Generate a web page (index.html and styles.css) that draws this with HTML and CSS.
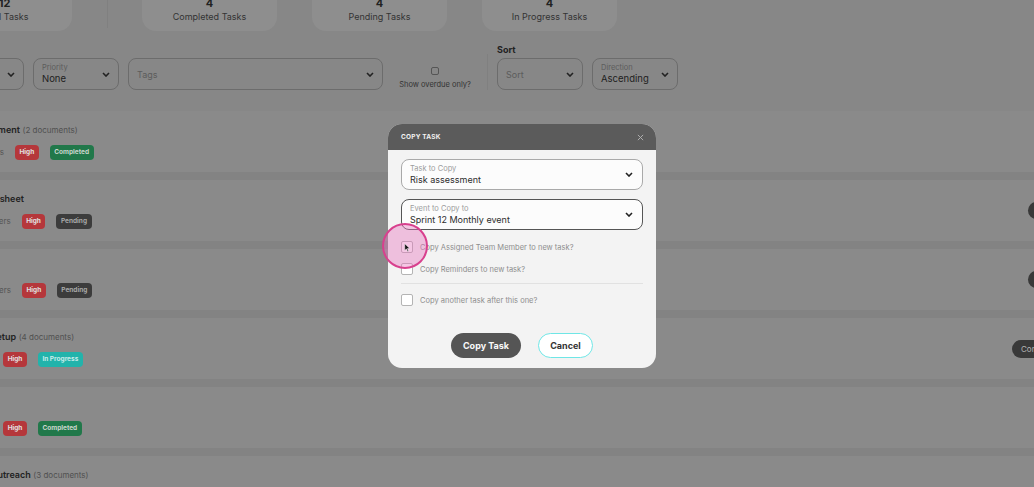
FILE: index.html
```html
<!DOCTYPE html>
<html lang="en">

<head>
  <meta charset="UTF-8">
  <meta name="viewport" content="width=device-width, initial-scale=1.0">
  <title>Tasks</title>
  <link rel="stylesheet" href="styles.css">
</head>

<body>
  <div class="page">
    <div class="stats">
      <div class="stat">
        <div class="stat-num">12</div>
        <div class="stat-label">Total Tasks</div>
      </div>
      <div class="stat-divider"></div>
      <div class="stat">
        <div class="stat-num">4</div>
        <div class="stat-label">Completed Tasks</div>
      </div>
      <div class="stat">
        <div class="stat-num">4</div>
        <div class="stat-label">Pending Tasks</div>
      </div>
      <div class="stat">
        <div class="stat-num">4</div>
        <div class="stat-label">In Progress Tasks</div>
      </div>
    </div>

    <div class="filters">
      <div class="select">
        <div class="select-text">
          <span class="select-label">Status</span>
          <span class="select-value">All</span>
        </div>
        <svg class="chev" viewBox="0 0 8 5"><path d="M1 1l3 3 3-3" /></svg>
      </div>
      <div class="select">
        <div class="select-text">
          <span class="select-label">Priority</span>
          <span class="select-value">None</span>
        </div>
        <svg class="chev" viewBox="0 0 8 5"><path d="M1 1l3 3 3-3" /></svg>
      </div>
      <div class="select select-tags">
        <span class="select-placeholder">Tags</span>
        <svg class="chev" viewBox="0 0 8 5"><path d="M1 1l3 3 3-3" /></svg>
      </div>
      <label class="overdue">
        <span class="box small"></span>
        <span>Show overdue only?</span>
      </label>
      <div class="vdivider"></div>
      <div class="sort">
        <div class="sort-title">Sort</div>
        <div class="sort-row">
          <div class="select">
            <span class="select-placeholder">Sort</span>
            <svg class="chev" viewBox="0 0 8 5"><path d="M1 1l3 3 3-3" /></svg>
          </div>
          <div class="select">
            <div class="select-text">
              <span class="select-label">Direction</span>
              <span class="select-value">Ascending</span>
            </div>
            <svg class="chev" viewBox="0 0 8 5"><path d="M1 1l3 3 3-3" /></svg>
          </div>
        </div>
      </div>
    </div>

    <div class="list">
      <div class="row">
        <div class="row-main">
          <div class="row-title"><b>Risk assessment</b> <span class="docs">(2 documents)</span></div>
          <div class="row-tags">
            <span class="meta">13 attachments</span>
            <span class="badge high">High</span>
            <span class="badge done">Completed</span>
          </div>
        </div>
      </div>
      <div class="row">
        <div class="row-main">
          <div class="row-title"><b>Cost spreadsheet</b></div>
          <div class="row-tags">
            <span class="meta">2 team members</span>
            <span class="badge high">High</span>
            <span class="badge pending">Pending</span>
          </div>
        </div>
        <span class="action">Reopen</span>
      </div>
      <div class="row">
        <div class="row-main">
          <div class="row-title"><b>Venue</b></div>
          <div class="row-tags">
            <span class="meta">4 team members</span>
            <span class="badge high">High</span>
            <span class="badge pending">Pending</span>
          </div>
        </div>
        <span class="action">Reopen</span>
      </div>
      <div class="row">
        <div class="row-main">
          <div class="row-title"><b>Hardware setup</b> <span class="docs">(4 documents)</span></div>
          <div class="row-tags">
            <span class="meta">2 reminders</span>
            <span class="badge high">High</span>
            <span class="badge progress">In Progress</span>
          </div>
        </div>
        <span class="action wide">Continue</span>
      </div>
      <div class="row">
        <div class="row-main">
          <div class="row-title"><b>Catering</b></div>
          <div class="row-tags">
            <span class="meta">2 reminders</span>
            <span class="badge high">High</span>
            <span class="badge done">Completed</span>
          </div>
        </div>
      </div>
      <div class="row">
        <div class="row-main">
          <div class="row-title"><b>Customer outreach</b> <span class="docs">(3 documents)</span></div>
          <div class="row-tags">
            <span class="meta">2 reminders</span>
            <span class="badge high">High</span>
            <span class="badge pending">Pending</span>
          </div>
        </div>
      </div>
    </div>
  </div>

  <div class="modal">
    <div class="modal-head">
      <span>COPY TASK</span>
      <svg class="close" viewBox="0 0 8 8"><path d="M1 1l6 6M7 1l-6 6" /></svg>
    </div>
    <div class="modal-body">
      <div class="field">
        <div class="select-text">
          <span class="field-label">Task to Copy</span>
          <span class="field-value">Risk assessment</span>
        </div>
        <svg class="chev" viewBox="0 0 8 5"><path d="M1 1l3 3 3-3" /></svg>
      </div>
      <div class="field active">
        <div class="select-text">
          <span class="field-label">Event to Copy to</span>
          <span class="field-value">Sprint 12 Monthly event</span>
        </div>
        <svg class="chev" viewBox="0 0 8 5"><path d="M1 1l3 3 3-3" /></svg>
      </div>
      <label class="check first">
        <span class="box"></span>
        <span>Copy Assigned Team Member to new task?</span>
      </label>
      <label class="check">
        <span class="box"></span>
        <span>Copy Reminders to new task?</span>
      </label>
      <div class="hr"></div>
      <label class="check">
        <span class="box"></span>
        <span>Copy another task after this one?</span>
      </label>
      <div class="modal-actions">
        <button class="btn btn-primary">Copy Task</button>
        <button class="btn btn-cancel">Cancel</button>
      </div>
    </div>
  </div>

  <div class="click-mark"></div>
  <svg class="cursor" viewBox="0 0 8 12"><path d="M1 1v9l2.2-2.2 1.6 3.4 1.3-.6-1.6-3.3H7.6z" /></svg>
</body>

</html>
```
FILE: styles.css
```css
* {
  box-sizing: border-box;
}

body {
  margin: 0;
  height: 487px;
  overflow: hidden;
  background: #878787;
  font-family: Inter, "Liberation Sans", sans-serif;
  color: #1f1f1f;
}

.page {
  width: 1200px;
  margin-left: -100px;
}

/* stat cards */
.stats {
  display: flex;
  gap: 35px;
  padding-left: 37px;
  margin-top: -12px;
}

.stat {
  width: 135px;
  height: 43px;
  background: #8e8e8e;
  border-radius: 0 0 14px 14px;
  text-align: center;
  padding-top: 8px;
}

.stat-num {
  font-size: 11px;
  font-weight: 700;
  line-height: 14px;
  color: #222;
}

.stat-label {
  font-size: 9px;
  line-height: 13px;
  color: #333;
}

.stat-divider {
  width: 1px;
  height: 40px;
  background: #808080;
  margin: 0 -1px 0 0;
}

/* filters */
.filters {
  display: flex;
  align-items: flex-end;
  gap: 9px;
  padding-left: 38px;
  margin-top: 13px;
}

.select {
  width: 86px;
  height: 32px;
  border: 1px solid #6c6c6c;
  border-radius: 8px;
  padding: 0 8px 0 8px;
  display: flex;
  align-items: center;
  justify-content: space-between;
}

.select-tags {
  width: 255px;
}

.select-text {
  display: flex;
  flex-direction: column;
}

.select-label {
  font-size: 7.5px;
  line-height: 10px;
  color: #5c5c5c;
}

.select-value {
  font-size: 9.5px;
  line-height: 12px;
  color: #1e1e1e;
}

.select-placeholder {
  font-size: 9px;
  color: #5c5c5c;
}

.chev {
  width: 8px;
  height: 5px;
  fill: none;
  stroke: #222;
  stroke-width: 1.6;
  flex: none;
}

.overdue {
  width: 86px;
  display: flex;
  flex-direction: column;
  align-items: center;
  gap: 5px;
  font-size: 7.5px;
  line-height: 10px;
  color: #333;
}

.box {
  width: 12px;
  height: 12px;
  border: 1px solid #b4b4b4;
  border-radius: 2px;
  background: #fff;
  flex: none;
}

.box.small {
  width: 8px;
  height: 8px;
  border-color: #555;
  background: transparent;
}

.vdivider {
  width: 1px;
  height: 36px;
  background: #808080;
}

.sort {
  display: flex;
  flex-direction: column;
}

.sort-title {
  font-size: 9px;
  font-weight: 700;
  line-height: 12px;
  margin-bottom: 2px;
  color: #222;
}

.sort-row {
  display: flex;
  gap: 9px;
}

/* list */
.list {
  margin-top: 21px;
  display: flex;
  flex-direction: column;
  gap: 8px;
  background: #838383;
}

.row {
  height: 61px;
  background: #8a8a8a;
  display: flex;
  align-items: center;
  justify-content: space-between;
  padding: 0 10px 0 47px;
}

.row-main {
  display: flex;
  flex-direction: column;
  gap: 9px;
}

.row-title {
  font-size: 9px;
  line-height: 12px;
  height: 12px;
  color: #222;
}

.row-title b {
  font-weight: 600;
}

.docs {
  font-size: 8px;
  color: #505050;
}

.row-tags {
  display: flex;
  align-items: center;
  gap: 11px;
}

.meta {
  font-size: 8px;
  color: #555;
}

.badge {
  height: 15px;
  line-height: 15px;
  padding: 0 4.5px;
  border-radius: 4px;
  font-size: 6.5px;
  font-weight: 700;
  color: #e2e2e2;
}

.high {
  background: #b5373b;
}

.done {
  background: #21784a;
  color: #c9d6cd;
}

.pending {
  background: #3c3c3c;
  color: #a9a9a9;
}

.progress {
  background: #22b3ab;
  color: #c8ecea;
}

.action {
  width: 62px;
  height: 17px;
  line-height: 17px;
  border-radius: 9px;
  background: #393939;
  color: #b5b5b5;
  font-size: 8px;
  padding-left: 8px;
}

.action.wide {
  width: 78px;
  height: 18px;
  line-height: 18px;
  padding-left: 9px;
}

/* modal */
.modal {
  position: absolute;
  left: 388px;
  top: 124px;
  width: 268px;
  border-radius: 14px;
  overflow: hidden;
  background: #f3f3f3;
}

.modal-head {
  height: 26px;
  background: #5b5b5b;
  display: flex;
  align-items: center;
  justify-content: space-between;
  padding: 0 12px 0 13px;
  font-size: 6.5px;
  font-weight: 700;
  color: #f2f2f2;
  letter-spacing: 0.2px;
}

.close {
  width: 7px;
  height: 7px;
  fill: none;
  stroke: #b0b0b0;
  stroke-width: 1.1;
}

.modal-body {
  padding: 9px 13px 10px;
  display: flex;
  flex-direction: column;
}

.field {
  height: 31px;
  border: 1px solid #a9a9a9;
  border-radius: 8px;
  background: #fcfcfc;
  display: flex;
  align-items: center;
  justify-content: space-between;
  padding: 0 9px 0 8px;
  margin-bottom: 9px;
}

.field.active {
  border-color: #555;
  margin-bottom: 11px;
}

.field-label {
  font-size: 7.5px;
  line-height: 10px;
  color: #9c9c9c;
}

.field-value {
  font-size: 9px;
  line-height: 12px;
  color: #2c2c2c;
}

.check {
  display: flex;
  align-items: center;
  gap: 7px;
  height: 12px;
  font-size: 7.5px;
  color: #8e8e8e;
  margin-bottom: 10px;
}

.hr {
  height: 1px;
  background: #e1e1e1;
  margin: -2px 0 10px;
}

.modal-actions {
  display: flex;
  justify-content: center;
  gap: 17px;
  margin-top: 17px;
}

.btn {
  height: 25px;
  border-radius: 13px;
  font-family: Inter, "Liberation Sans", sans-serif;
  font-size: 9px;
  font-weight: 700;
  padding: 0;
}

.btn-primary {
  width: 70px;
  border: none;
  background: #555;
  color: #fafafa;
}

.btn-cancel {
  width: 55px;
  border: 1.5px solid #6fe6e6;
  background: #fff;
  color: #333;
}

/* click highlight */
.click-mark {
  position: absolute;
  left: 382px;
  top: 223px;
  width: 46px;
  height: 46px;
  border-radius: 50%;
  border: 2px solid #d8408e;
  background: rgba(232, 120, 190, 0.42);
}

.cursor {
  position: absolute;
  left: 404px;
  top: 243px;
  width: 6px;
  height: 9px;
  fill: #111;
  stroke: #fff;
  stroke-width: 0.6;
}
```
